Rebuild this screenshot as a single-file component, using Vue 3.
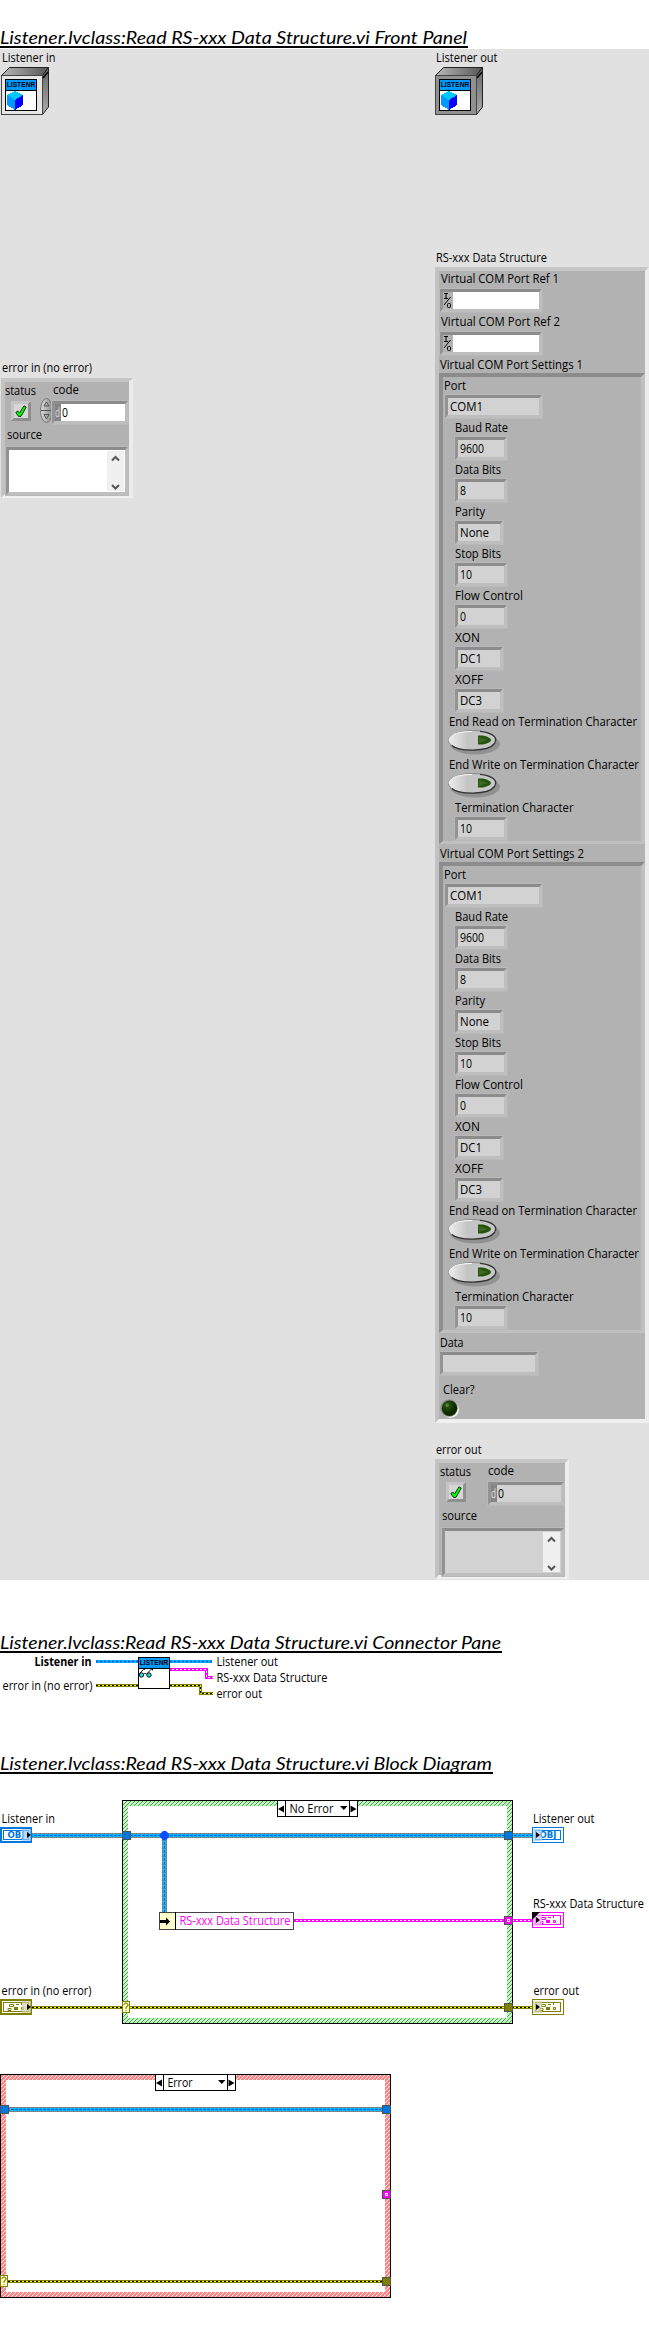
<script setup>
import { h } from 'vue'

// Text run fitted to a fixed width, so captions keep their measure in any font.
const Label = (p) =>
  h('svg', { width: p.w + 2, height: p.h || 16, style: { display: 'block', flex: 'none', overflow: 'visible' } }, [
    h('text', { x: 0, y: p.b || 12, textLength: p.w, lengthAdjust: 'spacingAndGlyphs', fill: 'currentColor' }, p.t)
  ])
Label.props = ['t', 'w', 'h', 'b']

const settings = [
  { t: 'Baud Rate', w: 53, v: '9600', vw: 24, fw: 54 },
  { t: 'Data Bits', w: 46, v: '8', vw: 6, fw: 54 },
  { t: 'Parity', w: 30, v: 'None', vw: 29, fw: 50 },
  { t: 'Stop Bits', w: 46, v: '10', vw: 12, fw: 54 },
  { t: 'Flow Control', w: 68, v: '0', vw: 6, fw: 54 },
  { t: 'XON', w: 25, v: 'DC1', vw: 22, fw: 50 },
  { t: 'XOFF', w: 28, v: 'DC3', vw: 22, fw: 50 }
]
const switches = [
  { t: 'End Read on Termination Character', w: 188 },
  { t: 'End Write on Termination Character', w: 190 }
]
const ports = [
  { t: 'Virtual COM Port Settings 1', w: 143 },
  { t: 'Virtual COM Port Settings 2', w: 144 }
]
const refs = [
  { t: 'Virtual COM Port Ref 1', w: 118 },
  { t: 'Virtual COM Port Ref 2', w: 119 }
]
const errors = [
  { id: 'in', t: 'error in (no error)', w: 90 },
  { id: 'out', t: 'error out', w: 45.5 }
]
const cases = [
  { dx: 0, dy: 0, name: 'No Error', w: 44, hatch: 'url(#hatchOk)' },
  { dx: -122, dy: 274, name: 'Error', w: 25, hatch: 'url(#hatchErr)' }
]
const terminals = [
  { x: 0, y: 1827, c: '#0078e0', l: '#9cc8f4', kind: 'obj', input: true },
  { x: 532, y: 1827, c: '#0078e0', l: '#a8d0f4', kind: 'obj' },
  { x: 532, y: 1912, c: '#ff00ff', l: '#ffb4ff', kind: 'cluster', corner: true },
  { x: 0, y: 1999, c: '#808000', l: '#d0d0a0', kind: 'cluster', input: true },
  { x: 532, y: 1999, c: '#808000', l: '#d4d4a8', kind: 'cluster' }
]
const captions = [
  { x: 1.5, y: 1823, w: 53.5, t: 'Listener in' },
  { x: 533, y: 1823, w: 61.5, t: 'Listener out' },
  { x: 533, y: 1908, w: 111, t: 'RS-xxx Data Structure' },
  { x: 1.5, y: 1995, w: 90, t: 'error in (no error)' },
  { x: 533.5, y: 1995, w: 45.5, t: 'error out' }
]
</script>

<template>
  <main class="page">
    <svg class="defs" width="0" height="0">
      <defs>
        <linearGradient id="topFace"><stop offset="0" stop-color="#b8b8b8" /><stop offset="1" stop-color="#555" /></linearGradient>
        <linearGradient id="sideFace" x2="0" y2="1"><stop offset="0" stop-color="#666" /><stop offset="1" stop-color="#aaa" /></linearGradient>
        <linearGradient id="pill"><stop offset="0" stop-color="#eee" /><stop offset=".4" stop-color="#c4c4c4" /><stop offset="1" stop-color="#c8c8c8" /></linearGradient>
        <radialGradient id="led" cx=".35" cy=".3"><stop offset="0" stop-color="#7b9b6b" /><stop offset=".3" stop-color="#24500e" /><stop offset="1" stop-color="#0c2c00" /></radialGradient>
        <linearGradient id="spin"><stop offset="0" stop-color="#ddd" /><stop offset="1" stop-color="#888" /></linearGradient>
        <pattern id="hatchOk" width="4" height="4" patternUnits="userSpaceOnUse">
          <rect width="4" height="4" fill="#b0ffb0" />
          <path d="M3 0h1v1h-1zM2 1h1v1h-1zM1 2h1v1h-1zM0 3h1v1h-1z" fill="#808080" />
        </pattern>
        <pattern id="hatchErr" width="4" height="4" patternUnits="userSpaceOnUse">
          <rect width="4" height="4" fill="#ff8080" />
          <path d="M3 0h1v1h-1zM2 1h1v1h-1zM1 2h1v1h-1zM0 3h1v1h-1z" fill="#fff" />
        </pattern>
        <g id="viHeader">
          <rect x=".5" y=".5" width="31" height="31" fill="#fff" stroke="#000" />
          <rect x="1" y="1" width="30" height="10" fill="#0099ff" />
          <path d="M1 11.5h30" stroke="#000" />
          <text x="1.7" y="8.3" class="tiny" textLength="28.6" lengthAdjust="spacingAndGlyphs">LISTENR</text>
        </g>
        <g id="tick">
          <path d="M.8 7.500l2-1.500 1.700 2L9 .8l2.200 1.200L6 11.400H3.500z" fill="#00ff00" stroke="#000" stroke-width=".8" />
        </g>
      </defs>
    </svg>

    <h2 class="title"><Label t="Listener.lvclass:Read RS-xxx Data Structure.vi Front Panel" :w="467" :h="18" :b="16" /></h2>

    <section class="panel">
      <div v-for="side in errors" :key="side.id" :class="['col', side.id]">
        <Label class="objcap" :t="side.id === 'in' ? 'Listener in' : 'Listener out'" :w="side.id === 'in' ? 53.5 : 61.5" />
        <svg class="object" width="49" height="48">
          <path d="M.5 8.500L8.500.5H47.500L41.500 8.500z" fill="url(#topFace)" stroke="#222" />
          <path d="M41.500 8.500L47.500.5V40L41.500 47.500z" fill="url(#sideFace)" stroke="#222" />
          <rect x=".5" y="8.500" width="41" height="39" :fill="side.id === 'in' ? '#e6e6e6' : '#909090'" stroke="#444" />
          <path d="M42 11L47 5" stroke="#000" stroke-width="1.500" />
          <use href="#viHeader" x="4" y="12" />
          <g shape-rendering="crispEdges">
            <path d="M14 24l8 4v10l-8 5-8-5V28z" fill="#0099ff" />
            <path d="M14 24l8 4-8 5-8-5z" fill="#00c8ff" />
            <path d="M14 33l8-5v10l-8 5z" fill="#0000ff" />
          </g>
        </svg>

        <template v-if="side.id === 'out'">
          <Label class="dscap" t="RS-xxx Data Structure" :w="111" />
          <div class="cluster data">
            <div v-for="r in refs" :key="r.t" class="ref">
              <Label class="in2" :t="r.t" :w="r.w" />
              <div class="field reffield">
                <svg width="10" height="17" class="io">
                  <path d="M1 1.500h4M3 1.500v5M1 6.500h4M1 13L7.500 5" fill="none" stroke="#000" />
                  <rect x="4.500" y="11.500" width="3" height="4" rx="1" fill="none" stroke="#000" />
                </svg>
                <div class="white"></div>
              </div>
            </div>
            <template v-for="p in ports" :key="p.t">
              <Label class="in1" :t="p.t" :w="p.w" />
              <div class="inner">
                <Label class="in1 portcap" t="Port" :w="22" />
                <div class="field port"><Label t="COM1" :w="33" /></div>
                <div v-for="s in settings" :key="s.t" class="setting">
                  <Label class="in1" :t="s.t" :w="s.w" />
                  <div class="field" :style="{ width: s.fw + 'px' }"><Label :t="s.v" :w="s.vw" /></div>
                </div>
                <div v-for="s in switches" :key="s.t" class="switch">
                  <Label :t="s.t" :w="s.w" />
                  <svg width="54" height="26">
                    <ellipse cx="27" cy="14" rx="25" ry="10.500" fill="#777" opacity=".55" />
                    <ellipse cx="24.500" cy="10.500" rx="24" ry="10" fill="url(#pill)" stroke="#888" />
                    <path d="M4 15.500C10 21.500 40 22.500 46.500 13.500 50.500 7.500 44 2.500 32 1.300" fill="none" stroke="#333" stroke-width="1.300" />
                    <path d="M1 10.500C2 3.500 12 1.500 24 1.500" fill="none" stroke="#fff" />
                    <path d="M30 5.500h5q8 2 8 4.500t-8 4.500h-5z" fill="#24540c" />
                    <path d="M31 7l9 3-9 3z" fill="#3c6824" />
                  </svg>
                </div>
                <div class="setting last">
                  <Label class="in1" t="Termination Character" :w="118.5" />
                  <div class="field term"><Label t="10" :w="12" /></div>
                </div>
              </div>
            </template>
            <Label class="in1 datacap" t="Data" :w="23.5" />
            <div class="field datafield"></div>
            <Label class="clearcap" t="Clear?" :w="31.5" />
            <svg class="led" width="20" height="20">
              <circle cx="10.500" cy="10.500" r="8.500" fill="#eee" /><circle cx="9" cy="9" r="8.700" fill="#8a8a8a" />
              <circle cx="9.500" cy="9.300" r="7.700" fill="url(#led)" />
            </svg>
          </div>
        </template>

        <Label :class="['errcap', side.id]" :t="side.t" :w="side.w" />
        <div :class="['cluster', 'err', side.id]">
          <div class="errtop">
            <div class="status">
              <Label t="status" :w="31" />
              <div class="tickbox"><svg width="12" height="12"><use href="#tick" /></svg></div>
            </div>
            <svg v-if="side.id === 'in'" class="spinner" width="13" height="25">
              <ellipse cx="6.500" cy="12.500" rx="6" ry="12" fill="url(#spin)" stroke="#777" />
              <path d="M1 12.500h11M4 8l2.500-4L9 8zM4 16.500h5L6.500 21z" fill="none" stroke="#555" />
            </svg>
            <div class="code">
              <Label class="codecap" t="code" :w="26" />
              <div class="field codefield">
                <span class="radix"><Label t="d" :w="5" /></span>
                <div class="num"><Label t="0" :w="6" /></div>
              </div>
            </div>
          </div>
          <Label class="srccap" t="source" :w="35" />
          <div class="field source">
            <svg width="17" height="40" class="scroll">
              <rect width="17" height="40" fill="#f0f0f0" />
              <path d="M5 9.500L8.500 6 12 9.500M5 34l3.500 3.500L12 34" fill="none" stroke="#555" stroke-width="2" />
            </svg>
          </div>
        </div>
      </div>
    </section>

    <h2 class="title second"><Label t="Listener.lvclass:Read RS-xxx Data Structure.vi Connector Pane" :w="501" :h="18" :b="16" /></h2>

    <svg class="draw" width="649" height="100" viewBox="0 1653 649 100">
      <g fill="none" stroke-width="3">
        <path d="M96 1661.500H138M170 1661.500H212" stroke="#00b4f8" />
        <path d="M96 1661.500H138M170 1661.500H212" stroke="#2060e0" stroke-width="2" stroke-dasharray="2 2" />
        <path d="M170 1669.500H206.500V1677.500H213" stroke="#ff00ff" />
        <path d="M172 1669.500H206.500V1677.500H213" stroke="#fff" stroke-width="1" stroke-dasharray="2 2" />
        <path d="M96 1685.500H138M170 1685.500H200.500V1693.500H213" stroke="#808000" />
        <path d="M96 1685.500H138M170 1685.500H200.500V1693.500H213" stroke="#ffff00" stroke-width="1" />
        <path d="M96 1685.500H138M170 1685.500H200.500V1693.500H213" stroke="#000" stroke-width="1" stroke-dasharray="2 2" />
      </g>
      <use href="#viHeader" x="138" y="1657" />
      <g fill="#20e0e0" stroke="#000" stroke-width=".9">
        <circle cx="141.500" cy="1675" r="2.200" /><circle cx="149" cy="1675" r="2.200" />
        <path d="M139.500 1673.500l4-4h1.500M143.700 1674.500l1.500-1.500 1.500 1.500M147 1673.500l4.500-4.500h1v1.500" fill="none" />
      </g>
      <text x="34.500" y="1666" textLength="57" lengthAdjust="spacingAndGlyphs" font-weight="700">Listener in</text>
      <text x="2.500" y="1690" textLength="90" lengthAdjust="spacingAndGlyphs">error in (no error)</text>
      <text x="216.500" y="1666" textLength="61.500" lengthAdjust="spacingAndGlyphs">Listener out</text>
      <text x="216.500" y="1682" textLength="111" lengthAdjust="spacingAndGlyphs">RS-xxx Data Structure</text>
      <text x="216.500" y="1698" textLength="45.500" lengthAdjust="spacingAndGlyphs">error out</text>
    </svg>

    <h2 class="title third"><Label t="Listener.lvclass:Read RS-xxx Data Structure.vi Block Diagram" :w="492" :h="18" :b="16" /></h2>

    <svg class="draw" width="649" height="574" viewBox="0 1774 649 574">
      <g v-for="c in cases" :key="c.name" :transform="`translate(${c.dx} ${c.dy})`">
        <rect x="122.500" y="1800.500" width="390" height="223" :fill="c.hatch" stroke="#000" />
        <rect x="128" y="1806" width="379" height="212" fill="#fff" />
        <rect x="277.500" y="1800.500" width="80" height="16" fill="#fff" stroke="#000" />
        <path d="M285.500 1800v17M349.500 1800v17" stroke="#000" />
        <path d="M284 1805.500v7l-6-3.500zM350.500 1805.500v7l6-3.500zM340 1806h7.500l-3.700 4z" />
        <text x="289.500" y="1813" :textLength="c.w" lengthAdjust="spacingAndGlyphs">{{ c.name }}</text>
      </g>

      <g fill="none">
        <path d="M32 1835.500H532M9 2109.500H382M164.500 1836V1912" stroke="#808080" stroke-width="5" />
        <path d="M32 1835.500H532M9 2109.500H382M164.500 1836V1912" stroke="#00ccff" stroke-width="3" />
        <path d="M32 1835.500H532M9 2109.500H382M164.500 1836V1912" stroke="#1a8cff" stroke-width="3" stroke-dasharray="1 3" />
        <path d="M34 1835.500H532M11 2109.500H382M164.500 1838V1912" stroke="#0050ff" stroke-width="1" stroke-dasharray="2 2" />
        <path d="M294 1920.500H532" stroke="#ff00ff" stroke-width="3" />
        <path d="M296 1920.500H532" stroke="#fff" stroke-dasharray="2 2" />
        <path d="M32 2007.500H532M8 2281.500H382" stroke="#808000" stroke-width="3" />
        <path d="M32 2007.500H532M8 2281.500H382" stroke="#ffff00" />
        <path d="M32 2007.500H532M8 2281.500H382" stroke="#000" stroke-dasharray="2 2" />
      </g>
      <path d="M163 1831h3l3 3v3l-3 3h-3l-3-3v-3z" fill="#0050ff" />

      <g v-for="c in cases" :key="c.name" :transform="`translate(${c.dx} ${c.dy})`">
        <g stroke="#505050">
          <rect x="122.500" y="1831.500" width="8" height="8" fill="#0078e0" />
          <rect x="504.500" y="1831.500" width="8" height="8" fill="#0078e0" />
          <rect x="504.500" y="1916.500" width="8" height="8" fill="#ff00ff" />
          <rect x="504.500" y="2003.500" width="8" height="8" fill="#808000" />
        </g>
        <rect x="507.500" y="1919.500" width="2" height="2" fill="#ff00ff" stroke="#fff" />
        <rect x="122.500" y="2001.500" width="7" height="11" fill="#ffffc8" stroke="#808000" />
        <path d="M124 2005v-1h1v-1h2v1h1v2h-1v1h-1v2M126 2010v1" fill="none" stroke="#808000" />
      </g>

      <rect x="159.500" y="1912.500" width="134" height="17" fill="#fff" stroke="#444" />
      <rect x="160" y="1913" width="15" height="16" fill="#ffffcc" />
      <path d="M175.500 1912v18" stroke="#000" />
      <path d="M160 1920h6v-2.500l4 4-4 4V1923h-6z" />
      <text x="179.500" y="1925" textLength="111" lengthAdjust="spacingAndGlyphs" fill="#ff00ff">RS-xxx Data Structure</text>

      <g v-for="t in terminals" :key="t.x + '-' + t.y" :transform="`translate(${t.x} ${t.y})`">
        <rect v-if="t.input" x="1" y="1" width="30" height="14" fill="#fff" :stroke="t.c" stroke-width="2" />
        <rect v-else x=".5" y=".5" width="31" height="15" fill="#fff" :stroke="t.c" />
        <rect x="3.500" y="3.500" width="25" height="9" fill="#fff" :stroke="t.c" />
        <text v-if="t.kind === 'obj'" x="7.500" y="11" class="obj" textLength="17" lengthAdjust="spacingAndGlyphs" :fill="t.c">OBJ</text>
        <g v-else fill="none" :stroke="t.c">
          <path d="M9.500 5.500h4v2h-4zM16 5.500h3M21.500 4v2M8 9.500h3v2H8zM21.500 8.500h2v2h-2z" />
          <rect x="14.500" y="8.500" width="3" height="2" :fill="t.c" />
        </g>
        <rect :x="t.input ? 22 : 1" y="2" width="9" height="12" :fill="t.l" opacity=".7" />
        <path :d="t.input ? 'M27 5v6l4-3z' : 'M4 5v6l4-3z'" />
        <path v-if="t.corner" d="M0 0h8L0 8z" />
      </g>

      <text v-for="c in captions" :key="c.x + c.t" :x="c.x" :y="c.y" :textLength="c.w" lengthAdjust="spacingAndGlyphs">{{ c.t }}</text>
    </svg>
  </main>
</template>

<style>
body { background: #fff; }
</style>

<style scoped>
.page { width: 649px; height: 2348px; overflow: hidden; font: 12px/16px "Open Sans", "Noto Sans", sans-serif; color: #000; background: #fff; display: flow-root; }
.defs { position: absolute; }
.title { margin: 28px 0 1px; width: fit-content; font: italic 400 17.500px/18px Lato, sans-serif; border-bottom: 2px solid #000; }
.title > svg { margin-right: -1px; }
.title.second { margin: 53px 0 0; }
.title.third { margin: 1px 0 0; }
.draw { display: block; }
.tiny { font: 700 7px "Liberation Sans", sans-serif; }
.obj { font: 700 8.500px "DejaVu Sans", sans-serif; }

.panel { display: flex; width: 649px; height: 1531px; background: #e1e1e1; overflow: hidden; }
.col { width: 434px; flex: none; padding-top: 1px; box-sizing: border-box; }
.col.out { width: 215px; }
.objcap { margin-left: 2px; }
.object { display: block; margin: 1px 0 0 1px; }
.errcap { margin-left: 2px; }
.errcap.in { margin-top: 245px; }
.errcap.out { margin-top: 19px; }
.dscap { margin: 135px 0 0 2px; }

.cluster { box-sizing: border-box; margin-left: 1px; background: #b2b2b2; border: 4px solid; border-color: #c6c6c6 #ececec #f0f0f0 #c2c2c2; display: flow-root; }
.data { width: 214px; height: 1156px; margin-top: 1px; }
.in1 { margin-left: 1px; }
.in2 { margin-left: 2px; }
.field { box-sizing: border-box; height: 25px; border: 4px solid; border-color: #8c8c8c #bebebe #bebebe #939393; background: #d2d2d2; display: flex; padding-left: 2px; padding-top: 1px; outline: 1px solid #b9b9b9; outline-offset: -1px; }
.ref { height: 43px; }
.reffield { width: 104px; margin-top: 1px; padding: 0; background: #b2b2b2; }
.white { flex: 1; background: #fff; }
.inner { box-sizing: border-box; height: 471px; width: 206px; border: solid; border-width: 4px 4px 3px 4px; border-color: #8c8c8c #c0c0c0 #c0c0c0 #8f8f8f; margin-bottom: 2px; display: flow-root; }
.portcap { margin-top: 1px; }
.port { width: 99px; margin: 0 0 1px 1px; }
.setting { height: 42px; margin-left: 11px; }
.switch { height: 43px; margin-left: 6px; }
.switch > svg:last-child { display: block; margin-left: -1px; }
.setting.last { height: 41px; }
.term { width: 54px; height: 25px; }
.datacap { margin-top: 2px; }
.datafield { width: 100px; }
.clearcap { margin: 6px 0 0 4px; }
.led { display: block; margin: 1px 0 0 1px; }

.err { width: 132px; height: 120px; }
.err.out { width: 134px; margin-top: 1px; }
.err.in { margin-top: 2px; }
.errtop { display: flex; height: 45px; }
.status { width: 35px; padding-top: 1px; flex: none; }
.out .status { padding-left: 1px; width: 47px; }
.tickbox { width: 20px; height: 20px; box-sizing: border-box; border: 3px solid; border-color: #c4c4c4 #8e8e8e #8e8e8e #c4c4c4; background: #d6d6d6; margin: 2px 0 0 6px; display: flex; align-items: center; justify-content: center; }
.spinner { margin-top: 16px; flex: none; }
.code { flex: 1; min-width: 0; }
.in .code { margin-left: -2px; }
.codecap { margin-left: 2px; }
.out .codecap { margin-left: 1px; }
.codefield { padding: 0; margin-top: 2px; height: 25px; }
.radix { width: 6px; background: #858585; color: #ddd; padding-top: 1px; flex: none; }
.num { flex: 1; background: #fff; padding: 1px 0 0 1px; }
.out .num { background: #d2d2d2; }
.srccap { margin: 0 0 0 2px; }
.out .srccap { margin-left: 3px; }
.source { height: 50px; margin: 3px 0 0; padding: 0; background: #fff; justify-content: flex-end; align-items: center; }
.out .source { background: #d2d2d2; margin-left: 2px; }
.scroll { margin-right: 1px; }
</style>
